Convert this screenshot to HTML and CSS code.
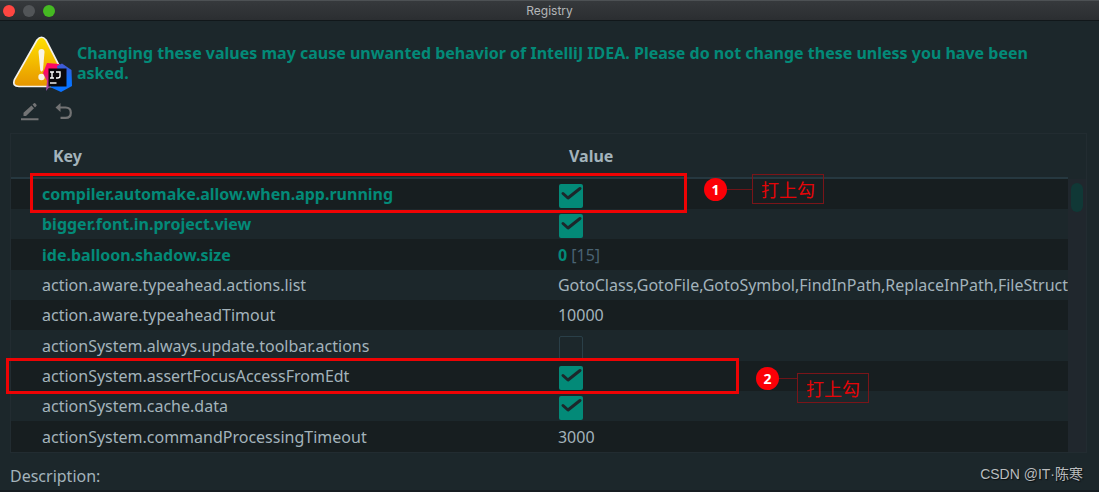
FILE: index.html
```html
<!DOCTYPE html>
<html lang="en">
<head>
<meta charset="utf-8">
<title>Registry</title>
<link rel="stylesheet" href="styles.css">
</head>
<body>
<div class="window">
  <header class="titlebar">
    <div class="lights">
      <button class="light light-close" aria-label="Close"></button>
      <button class="light light-min" aria-label="Minimize"></button>
      <button class="light light-zoom" aria-label="Zoom"></button>
    </div>
    <h1 class="title">Registry</h1>
  </header>

  <section class="warning">
    <svg class="warning-icon" viewBox="0 0 60 60" aria-hidden="true">
      <defs>
        <linearGradient id="tri" x1="0" y1="0" x2="0" y2="1"><stop offset="0" stop-color="#ffe100"/><stop offset="1" stop-color="#e69500"/></linearGradient>
        <linearGradient id="pink" x1="0" y1="0" x2="0" y2="1"><stop offset="0.3" stop-color="#ff0a63"/><stop offset="1" stop-color="#8a4fb0"/></linearGradient>
        <linearGradient id="blue" x1="0" y1="0" x2="0" y2="1"><stop offset="0" stop-color="#4758d0"/><stop offset="0.6" stop-color="#0a72ff"/></linearGradient>
      </defs>
      <path d="M24 5 Q28.500 -0.500 33 5 L53.500 45 Q55.500 51.500 49 51.500 H6 Q-1 51.500 1.500 44.500 Z" fill="url(#tri)" stroke="#f4f2ec" stroke-width="1.700"/>
      <path d="M25.500 17 Q25.500 14 28.500 14 Q31.500 14 31.500 17 L30 35 Q28.500 38 27.200 35 Z" fill="#f8f4e4"/>
      <circle cx="28.500" cy="42" r="3.200" fill="#f8f4e4"/>
      <path d="M30 38 L34 28 L46 29 L50 36 L38 50 L33 56 L34 46 Z" fill="url(#pink)"/>
      <path d="M44 31 L49 28.500 L58.500 35 L59 51 L48 57 L37 52 L46 44 Z" fill="url(#blue)"/>
      <rect x="35.500" y="33.500" width="18" height="18" fill="#0b090c"/>
      <path d="M37 37 H41 M39 37 V43 M37 43 H41 M43 37 H47 V41 Q47 43 44.500 43 H43" fill="none" stroke="#fff" stroke-width="1.400"/>
      <path d="M37 48 H43.500" stroke="#fff" stroke-width="1.400"/>
    </svg>
    <p class="warning-text">Changing these values may cause unwanted behavior of IntelliJ IDEA. Please do not change these unless you have been asked.</p>
  </section>

  <div class="toolbar">
    <button class="tool" aria-label="Edit">
      <svg viewBox="0 0 20 20"><path d="M1 17.200H18.500V19.300H1Z M3.500 11.800L11.500 4.500L14 7.300L6 15H3.500Z M12.500 3.600L14 2.200Q14.600 1.700 15.200 2.300L16.500 3.700Q17 4.300 16.400 4.900L15 6.400Z" fill="#727374"/></svg>
    </button>
    <button class="tool" aria-label="Revert">
      <svg viewBox="0 0 20 20"><path d="M6 6.500H11.500Q16.800 6.500 16.800 11.700Q16.800 16.900 11.500 16.900H6.500" fill="none" stroke="#727374" stroke-width="2.200"/><path d="M1.500 6.500L6.500 2V11Z" fill="#727374"/></svg>
    </button>
  </div>

  <main class="panel">
    <table class="registry">
      <thead>
        <tr><th class="col-key" scope="col">Key</th><th scope="col">Value</th></tr>
      </thead>
      <tbody>
        <tr class="changed"><td><label for="r1">compiler.automake.allow.when.app.running</label></td><td><input class="check" id="r1" type="checkbox" checked></td></tr>
        <tr class="changed"><td><label for="r2">bigger.font.in.project.view</label></td><td><input class="check" id="r2" type="checkbox" checked></td></tr>
        <tr class="changed"><td>ide.balloon.shadow.size</td><td>0 <span class="default">[15]</span></td></tr>
        <tr><td>action.aware.typeahead.actions.list</td><td>GotoClass,GotoFile,GotoSymbol,FindInPath,ReplaceInPath,FileStruct</td></tr>
        <tr><td>action.aware.typeaheadTimout</td><td>10000</td></tr>
        <tr><td><label for="r6">actionSystem.always.update.toolbar.actions</label></td><td><input class="check" id="r6" type="checkbox"></td></tr>
        <tr><td><label for="r7">actionSystem.assertFocusAccessFromEdt</label></td><td><input class="check" id="r7" type="checkbox" checked></td></tr>
        <tr><td><label for="r8">actionSystem.cache.data</label></td><td><input class="check" id="r8" type="checkbox" checked></td></tr>
        <tr><td>actionSystem.commandProcessingTimeout</td><td>3000</td></tr>
      </tbody>
    </table>
    <div class="scrollbar"><div class="thumb"></div></div>
  </main>

  <footer class="description">Description:</footer>

  <div class="mark mark-one"></div>
  <div class="mark mark-two"></div>
  <div class="callout callout-one"><span class="number">1</span><span class="leader"></span><span class="note" lang="zh">打上勾</span></div>
  <div class="callout callout-two"><span class="number">2</span><span class="leader"></span><span class="note" lang="zh">打上勾</span></div>
  <div class="watermark" lang="zh">CSDN @IT·陈寒</div>
</div>
</body>
</html>
```
FILE: styles.css
```css
* { box-sizing: border-box; }

body {
  margin: 0;
  background: #1c272b;
  color: #a3b3bb;
  font: 16px/20px "Noto Sans", "Noto Sans CJK SC", sans-serif;
}

button { padding: 0; border: 0; background: none; }

.window {
  position: relative;
  display: flex;
  flex-direction: column;
  min-height: 100vh;
  overflow: hidden;
  border-bottom: 2px solid #161d21;
}

.titlebar {
  display: grid;
  grid-template-columns: 1fr auto 1fr;
  align-items: center;
  height: 21px;
  padding: 0 3px;
  border-top: 1px solid #4d5154;
  border-bottom: 1px solid #11171a;
  background: linear-gradient(#36393c, #2b2e31);
}

.lights { display: flex; gap: 8px; }
.light { width: 12px; height: 12px; border-radius: 50%; }
.light-close { background: #ff4641; }
.light-min { background: #525558; }
.light-zoom { background: #45b922; }

.title {
  margin: 0;
  color: #b4b6b8;
  font: 12px/18px Inter, sans-serif;
}

.warning {
  display: flex;
  gap: 4px;
  padding: 14px 40px 0 13px;
}
.warning-icon { flex: none; width: 60px; height: 60px; }
.warning-text {
  margin: 8px 0 0;
  color: #038a78;
  font-weight: 700;
}

.toolbar { display: flex; gap: 14px; padding: 6px 20px 0; }
.tool { width: 20px; height: 20px; }
.tool svg { display: block; width: 20px; height: 20px; }

.panel {
  display: flex;
  margin: 12px 12px 0 10px;
  border: 1px solid #222c31;
}

.registry {
  flex: 1;
  min-width: 0;
  table-layout: fixed;
  border-collapse: collapse;
}
.registry th {
  height: 44px;
  padding: 0 0 0 19px;
  border-bottom: 2px solid #263840;
  text-align: left;
  font-weight: 700;
}
.registry .col-key { width: 51%; padding-left: 42px; }
.registry td {
  height: 30px;
  padding: 0 0 0 8px;
  overflow: hidden;
  white-space: nowrap;
}
.registry td:first-child { padding-left: 31px; }
.registry tr:nth-child(3n) td,
.registry tr:first-child td { height: 31px; }
.registry tbody tr:nth-child(odd) { background: #171e20; }
.changed { color: #038a78; font-weight: 700; }
.default { color: #4a6373; font-weight: 400; }

.check {
  display: block;
  appearance: none;
  width: 24px;
  height: 24px;
  margin: 4px 0 0 1px;
  border: 1px solid #2a3f48;
  border-radius: 2px;
}
.check:checked {
  border: 0;
  background: #038a78 url("data:image/svg+xml,%3Csvg xmlns='http://www.w3.org/2000/svg' viewBox='0 0 24 24'%3E%3Cpath d='M4 9.500L9 14L21 4.500' fill='none' stroke='%231c272b' stroke-width='3' stroke-linecap='round' stroke-linejoin='round'/%3E%3C/svg%3E");
}

.scrollbar {
  width: 18px;
  margin-top: 45px;
  padding: 4px 3px 0;
  background: #20272d;
}
.thumb { height: 29px; border-radius: 6px; background: #103836; }

.description { padding: 13px 10px 4px; }

.mark { position: absolute; border: 3px solid #ee0304; }
.mark-one { left: 30px; top: 173px; width: 657px; height: 40px; }
.mark-two { left: 6px; top: 358px; width: 733px; height: 36px; }

.callout { position: absolute; display: flex; align-items: flex-start; }
.callout-one { left: 704px; top: 174px; align-items: center; }
.callout-two { left: 756px; top: 367px; }
.number {
  width: 23px;
  height: 23px;
  border-radius: 50%;
  background: #fb0007;
  color: #fff;
  font: 700 14px/23px "Noto Sans", sans-serif;
  text-align: center;
}
.leader { width: 25px; height: 1px; background: #6d1418; }
.note {
  padding: 0 8px;
  border: 1px solid #7a1519;
  color: #e60508;
  font: 18px/28px "Noto Sans CJK SC", sans-serif;
}
.callout-two .leader { width: 18px; margin-top: 11px; }
.callout-two .note { margin-top: 6px; }

.watermark {
  position: absolute;
  right: 16px;
  bottom: 6px;
  color: #b9bcbe;
  font: 14px/20px "Liberation Sans", "Noto Sans CJK SC", sans-serif;
  text-shadow: 1px 1px 1px #0b0f11;
}
```
